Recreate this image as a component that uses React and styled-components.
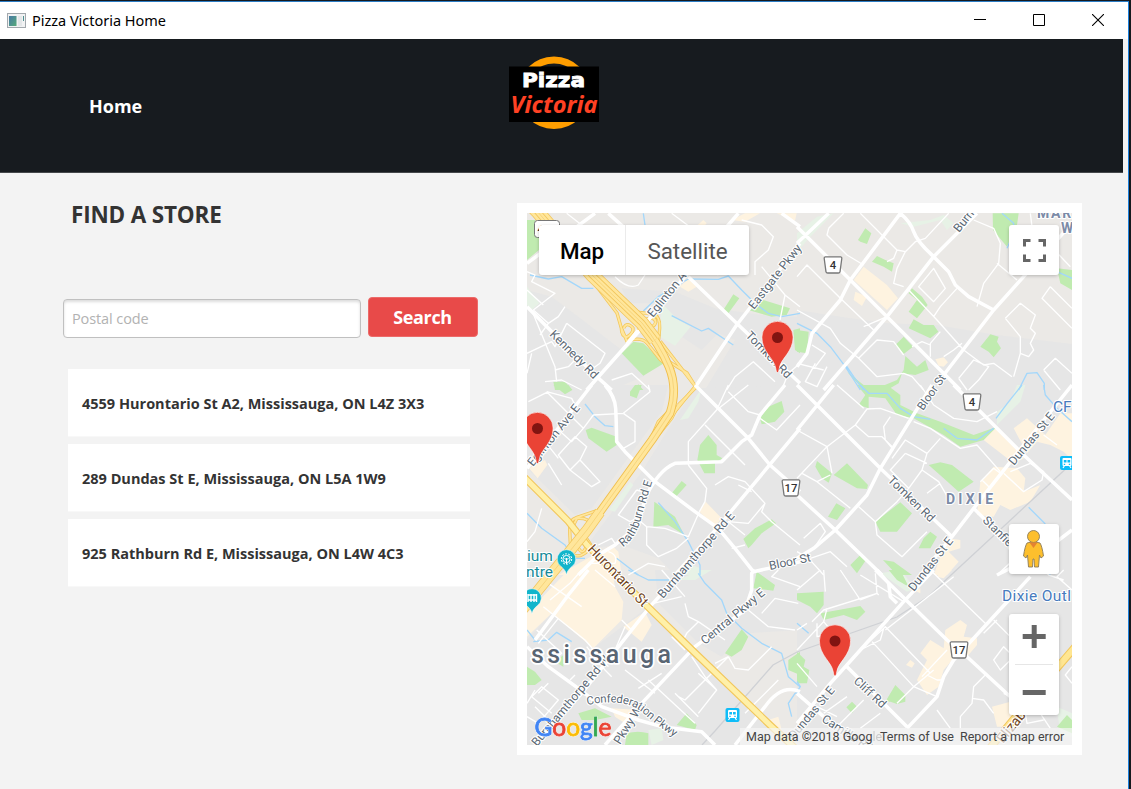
import React from 'react';
import styled, { createGlobalStyle } from 'styled-components';

const GlobalStyle = createGlobalStyle`
  * { box-sizing: border-box; }
  body { margin: 0; background: #14171b; overflow: hidden; }
  button, input { font-family: inherit; }
`;

const ui = `'Open Sans', 'Noto Sans', sans-serif`;

const Desktop = styled.div`
  width: 1131px;
  height: 789px;
  padding: 1px 2px 0 0;
  background: #15191e;
  font-family: ${ui};
`;

const AppWindow = styled.div`
  height: 788px;
  display: flex;
  flex-direction: column;
  background: #f3f3f3;
  border-top: 1px solid #2b7cc4;
  border-right: 1px solid #1c80dc;
`;

const TitleBar = styled.div`
  height: 37px;
  flex: none;
  display: flex;
  align-items: center;
  justify-content: space-between;
  padding-left: 7px;
  background: #fff;
`;

const TitleGroup = styled.div`
  display: flex;
  align-items: center;
  gap: 6px;
`;

const Title = styled.span`
  font-family: 'Noto Sans', sans-serif;
  font-size: 14.5px;
  letter-spacing: -0.02px;
  line-height: 18px;
  margin-top: -2px;
  color: #000;
  white-space: nowrap;
`;

const WindowControls = styled.div`
  display: flex;
  gap: 47px;
  padding: 0 24px 1px 0;
  svg { display: block; }
`;

const Header = styled.header`
  height: 134px;
  width: 1123px;
  flex: none;
  display: flex;
  background: #171b1f;
  border-bottom: 1px solid #45484b;
`;

const NavLink = styled.a`
  width: 420px;
  margin-left: 89px;
  padding-top: 55px;
  font-size: 18px;
  line-height: 24px;
  font-weight: 700;
  color: #fff;
`;

const LogoSlot = styled.div`
  padding-top: 16px;
  svg { display: block; }
`;

const Main = styled.main`
  flex: 1;
  display: flex;
  align-items: flex-start;
`;

const Finder = styled.section`
  width: 517px;
  padding: 28px 0 0 63px;
`;

const Heading = styled.h1`
  margin: 0 0 69px 8px;
  height: 27px;
  font-size: 22.5px;
  line-height: 27px;
  font-weight: 700;
  letter-spacing: -0.17px;
  color: #333;
`;

const SearchRow = styled.form`
  display: flex;
  gap: 6.5px;
  height: 40px;
`;

const PostalInput = styled.input`
  width: 298px;
  height: 39px;
  margin-top: 2px;
  padding: 0 8px 1px;
  border: 1px solid #c0c0c0;
  border-radius: 4px;
  background: #fff;
  box-shadow: inset 0 2px 3px #ddd;
  font-size: 14.5px;
  &::placeholder { color: #b2b2b2; opacity: 1; font-weight: 400; letter-spacing: -0.1px; }
`;

const SearchButton = styled.button`
  width: 110px;
  height: 40px;
  padding: 0 0 1px;
  border: 1px solid #ec6a69;
  border-radius: 4px;
  background: #e84a49;
  color: #fff;
  font-size: 18px;
  font-weight: 700;
  letter-spacing: -0.35px;
`;

const StoreList = styled.ul`
  list-style: none;
  margin: 32px 0 0 5px;
  padding: 0;
  width: 402px;
  display: flex;
  flex-direction: column;
  gap: 7px;
`;

const Store = styled.li`
  height: 68px;
  padding: 1px 14px 0;
  display: flex;
  align-items: center;
  background: #fff;
  border: 1px solid #f8f8f8;
  border-width: 0 0 1px;
  color: #333;
  font-size: 14.5px;
  font-weight: 700;
  white-space: nowrap;
`;

const MapPanel = styled.section`
  width: 565px;
  height: 552px;
  margin-top: 30px;
  padding: 10px;
  background: #fff;
`;

const MapView = styled.div`
  position: relative;
  width: 545px;
  height: 532px;
  overflow: hidden;
  font-family: Roboto, sans-serif;
  > svg { display: block; }
`;

const GoogleMark = styled.text`
  font-family: Lato, sans-serif;
  font-size: 25.5px;
  stroke-width: 0.9px;
  filter: drop-shadow(0 0 0.6px #fff) drop-shadow(0 0 0.6px #fff) drop-shadow(0 0 0.6px #fff);
`;

const GoogleLetter = styled.tspan`
  fill: ${(p) => p.$color};
  stroke: ${(p) => p.$color};
`;

const MapTypes = styled.div`
  position: absolute;
  left: 12px;
  top: 12px;
  width: 210px;
  height: 50px;
  display: flex;
  background: #fff;
  border-radius: 3px;
  box-shadow: 0 1px 4px -1px rgba(0, 0, 0, 0.35);
`;

const MapType = styled.button`
  width: ${(p) => p.$width}px;
  padding: 2px 0 0;
  border: 0;
  border-right: ${(p) => (p.$active ? '1px solid #ebebeb' : '0')};
  background: none;
  color: ${(p) => (p.$active ? '#000' : '#565656')};
  font-size: 22.4px;
  font-weight: ${(p) => (p.$active ? 500 : 400)};
`;

const MapControl = styled.div`
  position: absolute;
  right: 13px;
  top: ${(p) => p.$top}px;
  width: 50px;
  height: ${(p) => p.$height}px;
  background: #fff;
  border-radius: 3px;
  box-shadow: 0 1px 4px -1px rgba(0, 0, 0, 0.35);
  svg { display: block; }
`;

const Attribution = styled.div`
  position: absolute;
  right: 0;
  bottom: 0;
  height: 17px;
  display: flex;
  align-items: center;
  padding: 0 8px 0 6px;
  background: rgba(245, 245, 245, 0.7);
  color: #444;
  font-size: 12.5px;
  line-height: 17px;
  white-space: nowrap;
`;

const Credit = styled.span`
  width: ${(p) => p.$width}px;
  flex: none;
`;

const Faded = styled.span`
  opacity: 0.22;
`;

/* Map geometry, one entry per sheet; units are thirds of a pixel from the sheet's origin. */
const sheets = [
  {
    x: 515, y: 200,
    homes: 'M36 270 110 290 190 350 320 450 390 527 290 570H36ZM320 265 480 275 600 325 780 350 855 350V570H570L660 420 610 400 560 450 500 410 440 310 340 310Z',
    pale: 'M440 310 490 360 527 380 480 437 435 410ZM36 260 73 310 50 330 36 315Z',
    parks: 'M36 60 60 60 75 105 72 150 36 180ZM320 460 355 425 385 430 447 490 385 527ZM625 330 655 283 673 295 640 340ZM700 330 745 300 825 325 815 345 770 350ZM835 390 855 385V460L840 450ZM115 545 150 545 172 570H120ZM355 570 370 553 385 570Z',
    shops: 'M565 60 575 70 545 105 525 95ZM650 60 690 40H735L690 65ZM785 40H845L840 62ZM495 260 520 235 545 260 520 275Z',
    water: 'M45 225 100 237 140 230 200 265 235 265M385 333 430 290 520 237 610 238 640 228 680 270 720 310 760 340 800 350 855 340M470 347 560 393 580 385 655 435M385 40 390 75',
    minor: 'M36 215 60 225 50 245 120 280 55 330M85 315 36 270M55 330 100 370 130 350 150 320M100 370 75 405M155 370 270 460 255 490 220 515M155 370 120 440 110 425 36 460M50 330 120 500 125 545M50 460 36 520M90 545 140 540 200 570M120 510 160 500 180 480M300 230Q340 270 370 255L390 225M290 540 350 520 405 570M635 570 660 530 715 485 780 545M855 490 820 520 800 570M855 320 810 285 795 360M155 40 200 75M680 60 740 75 775 110 760 150 720 185V225M470 40 530 85M560 180 610 225M740 200 810 285',
    major: 'M215 570 375 390 640 75 670 40M520 230 665 370 855 550M545 555 665 375 855 130M36 320 245 530 290 570M36 190 240 40M800 40 855 80M280 40 330 85',
  },
  {
    x: 797, y: 200,
    homes: 'M0 330 130 350 270 370 420 375 600 405 825 432V570H0Z',
    pale: 'M0 100 60 50 110 40 40 110 10 145 0 140ZM310 70 400 60 440 45 470 70 450 90 430 60 350 80Z',
    parks: 'M183 120 205 85 223 100 210 132 190 125ZM225 185 240 168 265 180 290 190 285 215 260 200ZM345 265 375 290 392 315 360 355 335 335 360 300 335 280ZM350 358 380 375 410 375 424 395 400 415 335 385ZM295 435 320 410 348 440 320 462ZM325 468 360 500 385 480 395 510 355 525 315 520 305 550 270 570H200L150 515 200 555 240 565 300 540 320 510ZM550 440 580 403 605 410 600 425 612 445 590 472 575 455ZM587 40H665L660 75 630 140 588 90ZM780 205 825 210V270L790 250ZM0 390 35 395 30 460 0 455Z',
    shops: 'M200 200 270 255 303 295 270 330 170 240ZM175 275 210 290 195 318 170 300ZM415 478 440 472 453 487 440 500 425 497Z',
    water: 'M0 370 60 400 100 440 145 500 190 570M143 490 170 530 200 570M665 570 690 520 720 518 742 550V570M615 40 650 70V100L630 145M780 215 825 235',
    minor: 'M95 85 90 105 150 165 200 195M95 85 140 40M190 40 300 150 325 155 355 125 385 115 455 40M325 155 300 205 290 250 320 260M300 150 290 175 270 185M0 230 30 195 130 295 230 390M0 330 100 385 130 430 185 475 240 420 290 425 320 465M185 475 240 530 320 520 345 530 380 570M410 205 365 260 410 305 445 265ZM480 265 430 320 410 350M335 270 420 360 500 450M530 60 590 85 610 130 605 190 560 250 540 320M600 190 660 240M625 355 670 310 715 345 700 385 715 400 700 430 710 450 695 470 670 460M625 355 670 410V460L650 530M760 260 735 295 825 385M760 260 825 325M500 450 560 495 590 490 645 530M485 535 530 480 575 500 545 540 515 570M485 535 510 570M740 510 775 475 825 520M740 510 790 570M45 435 85 460 55 500 M0 490 80 510M90 500 60 560 25 545 55 490M400 470 400 430 430 395M345 440 375 425 400 435M440 470 470 450 495 430M200 380 270 350M700 40 705 80 820 200',
    major: 'M0 80 160 240 270 350 490 570M80 570 270 350 410 170 540 40M310 40Q340 65 350 95T410 170L455 215 475 255 515 290 590 330M440 525 590 330 680 230 825 70M310 40 160 240 130 300 45 400 30 460 0 500M0 130 95 40',
  },
  {
    x: 515, y: 385,
    homes: 'M36 0H460L440 80 360 190 230 370 180 390 36 250ZM480 100 540 10 855 0V570H480L430 520 320 480 210 490 380 260Z',
    pale: 'M345 290 355 300 300 380 282 375ZM495 105 560 10 550 50 520 100ZM510 530 555 550V570H500Z',
    parks: 'M115 0H160L172 15 150 28ZM345 20 360 0H380L365 40 345 32ZM212 135 230 128 305 155V180L275 200 220 160ZM735 100 760 65 800 48 808 80 780 110 740 118ZM555 180 580 150 605 180 605 210 622 220 600 235V265H568L547 225ZM470 325 500 288 515 300 480 338ZM418 350 480 395 508 450 460 420 415 425ZM685 462 720 430 770 403 783 415 740 445 710 480 700 490Z',
    shops: 'M42 250 90 225 97 240 68 280ZM553 380 572 350 620 400 600 425ZM130 570 200 530 290 480 310 500 320 570Z',
    water: 'M210 57 240 95 270 122 295 125M36 385 80 430 150 480 175 520 210 520M430 353 480 410 520 470 555 540V570M305 520 370 570',
    minor: 'M95 20 155 80 205 130 170 170 125 130M205 130 235 90 325 85M95 20 170 40 185 70M40 50 100 20M130 210 180 155 215 185 195 225 165 255ZM195 225 255 290 230 305 165 255M90 170 130 220M100 235 140 300M325 85 405 20 400 0M325 85 360 110V170L325 190M80 370 60 440 36 470M520 240 520 170 605 75 700 0M605 75 640 0M520 240 575 310 570 350 553 380M570 120 690 240M600 300 640 275 690 290 750 355 700 415 640 410 690 450M750 355 740 380 770 410 855 480M670 300 710 320M365 315 310 390 345 410 365 400M365 315 400 325M365 400 395 425 450 430 520 455 553 380M395 425V480L430 515 485 490 520 460M735 100 785 135 855 60M690 480 650 490M640 20 700 80 735 90M250 480 290 460 300 475M280 500Q310 510 300 535H220M340 570 400 535 450 545',
    major: 'M270 0Q300 35 302 70T305 170L330 200 420 290 540 380 610 430 660 490 715 560M540 0 700 160 765 240 855 320M855 130 610 425 480 570M810 0 735 90 710 150 680 170 620 230 480 235Q430 255 390 340L370 420 300 480 250 510 190 570M36 250 230 0M855 530 715 560',
  },
  {
    x: 797, y: 385,
    homes: 'M0 0H825V570H0Z',
    pale: 'M600 80 640 50 660 0H685L670 50 600 120Z',
    parks: 'M180 0H270L310 30 310 60 360 85 430 110 530 150 600 125 560 165 490 185 440 150 350 100 300 90 265 40 215 35 215 70 185 60 205 30ZM60 228 105 265 95 293 75 280 55 245ZM110 270 150 235 213 300 210 312 180 310ZM93 395 118 355 145 370 120 405ZM235 410 310 352 345 385 300 440 250 440ZM365 490 380 460 400 440 420 455 400 490ZM395 240 430 232 465 240 530 290 485 320 440 280ZM160 540 190 510 207 525 180 565ZM258 525 290 530 345 570H300Z',
    shops: 'M560 165 595 125 690 215 650 235ZM650 130 690 100 745 150 790 85H825V225L800 200 760 180 720 170 690 205ZM550 290 590 245 660 250 685 280 680 320 730 300 700 350 640 375 610 360 590 395 540 390ZM450 460 490 465V490L455 500 485 530 450 570H410Z',
    water: 'M190 0 215 25 270 25 310 70 350 95 400 103 M440 130 480 160 540 165 590 130 M597 100 635 50 675 0M740 0 745 30 780 70 825 110M695 367 745 417',
    minor: 'M0 135 90 185 105 265M90 185 175 120 210 72 250 70 335 100M175 120 215 155 255 155 290 190M280 95 260 125 265 165 290 195M15 265 60 290 160 370M0 280 90 185M60 290 100 270M350 110 400 130 490 190 540 180 610 260M430 160 390 205 375 255 335 310M390 205 325 165 285 220M325 205 390 235M325 205 280 255 335 310M375 255 425 290 460 350M335 310 300 350 235 410 240 450 315 515 350 480 390 440M430 295 390 325M185 365 235 410M20 460 70 415 85 440 50 490M0 500 35 520 80 570M40 520 100 500 150 545M550 290 590 250 610 265M620 265 680 320 735 285 740 260 700 235 640 260M555 285 580 310M370 0 410 60 470 100 540 110 600 80M740 150 780 180M120 0 200 70M600 570 720 460',
    major: 'M0 0 60 60 250 250 465 455M470 0 540 70 680 210 825 345M405 0 250 250 210 330 115 435 50 490 0 520M825 0 680 180 530 370 465 455 370 570M0 135 110 0M0 330 115 435 255 570M825 435 740 500 600 570M530 370 650 490',
  },
  {
    x: 515, y: 570,
    homes: 'M36 210 110 130 235 235 400 110 530 240 650 370 790 500V525H36ZM420 0H855V180L690 190 620 260 550 220 430 100Z',
    pale: 'M400 480 440 475 445 510 410 525ZM490 30 555 0H590L540 30Z',
    parks: 'M36 290 60 305 80 330 60 345H36ZM190 430 240 415 290 440 240 450 200 450ZM485 465 515 430 545 465 540 480ZM335 490Q370 480 400 490V525H330ZM630 250 680 178 700 200 680 240 650 260ZM715 55 725 5 780 45 775 62ZM820 270 855 245V315L820 300ZM120 275 145 255V290Z',
    shops: 'M36 130 160 0H290L300 50 325 95 320 150 235 235 110 130 36 200ZM325 170 390 125 410 165 380 215ZM290 415 370 420 330 460 300 440ZM760 450 790 440 800 480 780 500Z',
    water: 'M55 215 100 210 125 187 170 215M340 0 400 30 470 30 510 15 M550 10 570 40 620 90 635 130 680 175 740 220 800 250 820 320 855 350M830 440 820 400 840 370 855 365M36 20 100 0M36 180 60 210',
    minor: 'M85 110 210 210 280 290M65 180 140 250 110 280M130 145 70 220M105 90 165 40 200 0M100 40 200 110M240 0 300 50M165 330 180 315M320 150 350 180M215 230 270 300 290 320M330 300 420 370M370 355 440 310M400 330 540 460M480 370 550 440M550 310 605 360 550 430M530 260 570 320 605 360M490 380 510 390 570 330 640 260M510 100 520 140 550 155 515 190 500 220M550 155 630 210M415 100 500 80M470 200 510 240M640 260 600 280M640 260 660 295 700 300 740 260 770 230M700 120 760 170 840 180M740 130 780 85 850 100M790 0 770 20 855 50M36 440 70 460 130 390 80 350 50 380 110 430M100 340 70 370M60 410 110 460M36 400 60 360M440 0 510 80M690 430 790 330M330 170 300 240',
    major: 'M36 230 100 290 190 355 260 410 370 450 440 470 560 485 600 525M60 210 160 75 220 0M505 0 405 110 200 370 60 525M720 0 710 10V60L690 120 540 230 380 400 270 525M660 525 750 410Q800 340 855 365',
  },
  {
    x: 797, y: 570,
    homes: 'M0 0H825V525H0Z',
    pale: 'M250 10 310 0 355 55 330 65ZM780 410 825 430V500H790Z',
    parks: 'M0 70 80 65V105L60 130 40 110 0 90ZM70 130 190 108 205 125 180 150 140 135 80 150ZM265 395 295 345 325 375V395L300 402 280 395ZM148 412 165 395 180 410 165 430ZM0 245 25 270 20 290 37 300 30 340H0ZM780 470 810 435 825 450V490ZM275 0H310L335 50 300 30Z',
    shops: 'M445 180 490 150 510 165 500 200 540 205V225L510 260 470 265 440 300 425 350 390 375 360 330 390 270 370 250 400 210 440 235ZM327 285 340 270 353 280 345 293ZM420 20 430 0H465L440 25ZM585 410 640 395 680 420 660 470H600ZM350 60 370 55V70Z',
    water: 'M0 335 10 350 0 365M0 160 35 190M740 0 760 15',
    minor: 'M0 60 70 0M80 0 85 65M90 115 80 155 110 190 60 200 60 160M45 155 80 120 240 70 245 75M190 90 240 70 235 10M80 155 0 240M190 15 320 95M0 180 30 160M190 240 265 170 400 310M260 175 250 210 190 240M225 215 350 350 420 380M265 180 470 20M130 0 190 90M375 320 450 240M390 315 420 330 440 330M350 350 410 300M300 400 350 350M60 410 120 440M80 430 150 380M120 470 200 390M0 280 60 350M400 0 570 165M590 270 620 230 650 260 610 300ZM590 150 680 240M600 150 560 190M570 310 530 350 525 400 490 440 490 475M525 385 560 390 590 430M620 370 660 390M420 420 460 475M740 0 755 15 800 30M800 0 780 20 825 60M710 400 760 475M700 420 640 475M825 290 805 315 825 340M680 400 690 460 740 450M190 475 250 430',
    major: 'M410 0 320 95 190 240 100 340 0 460M235 0 450 210 510 260 640 380M330 475 420 380 440 320 470 270 700 20M150 290 330 470M0 370 80 440M240 0 275 40 280 80 300 100',
  },
];

const highway = 'M526 200 537 211 592 275 642 323Q660 345 669 367T670 413L652 440 587 530 544 583 518 615';
const expressLanes = 'M526 200 537 211 592 275 642 323 655 340';
const lowerLanes = 'M600 512 587 530 544 583 518 615';
const hurontario = 'M524 477 568 521 587 545 648 607 692 650 770 725 796 749';
const elizabeth = 'M1075 647 1027 703 990 748';
const interchanges = [
  [527, 213, 'M205 215 270 300 283 345 300 385 335 350M283 345Q283 370 300 372 320 360 318 345 300 325 290 345M300 385Q340 370 360 390L400 440 440 470M305 292Q340 300 378 303 400 310 398 345L395 380M345 325Q385 305 386 328 380 350 355 332M400 385 505 520 432 610M425 445 480 480 505 520M435 480 445 570'],
  [527, 440, 'M215 210 150 232Q125 240 128 270L130 310M150 235Q190 232 187 258L175 280M150 235 132 270M205 225 175 285 187 328Q160 355 140 345M148 310Q165 355 178 318M175 290 195 320'],
  [515, 385, 'M465 75 430 110 400 180M490 60 470 100 430 150M545 5 490 60'],
];
const rail = 'M1072 463 950 576 929 596 897 617 797 652 773 665 715 731 702 745';

function Sheets({ layer, ...rest }) {
  return (
    <g {...rest}>
      {sheets.map((s) => (
        <path key={`${s.x}-${s.y}`} transform={`translate(${s.x} ${s.y}) scale(.33333)`} d={s[layer]} />
      ))}
    </g>
  );
}

function Ramps(props) {
  return (
    <g {...props}>
      {interchanges.map(([x, y, d]) => (
        <path key={`${x}-${y}`} transform={`translate(${x} ${y}) scale(.33333)`} d={d} />
      ))}
    </g>
  );
}

const labels = [
  ['Eglinton Ave E', 653, 318, -51, 12],
  ['Eastgate Pkwy', 754, 310, -52, 12],
  ['Kennedy Rd', 549, 335, 45, 12],
  ['Tomken Rd', 745, 336, 46, 12],
  ['Burnhamthorpe Rd E', 663, 599, -49, 12],
  ['Burnhamthorpe Rd W', 537, 747, -50, 12],
  ['Bloor St', 923, 411, -55, 11.5],
  ['Bloor St', 770, 570, -12, 12],
  ['Tomken Rd', 887, 481, 44, 12],
  ['Dundas St E', 1014, 466, -50, 12],
  ['Dundas St E', 914, 592, -52, 12],
  ['Dundas St E', 794, 740, -50, 12],
  ['Stanfield Rd', 982, 521, 45, 12],
  ['Central Pkwy E', 705, 645, -40, 12],
  ['Cliff Rd', 853, 682, 43, 12],
  ['Camilla Rd', 821, 721, 33, 12],
  ['Pkwy W', 620, 745, -58, 12],
  ['Burnhamthorpe', 959, 233, -51, 12],
];

const googleLetters = [
  ['G', '#4285f4'],
  ['o', '#ea4335'],
  ['o', '#fbbc05'],
  ['g', '#4285f4'],
  ['l', '#34a853'],
  ['e', '#ea4335'],
];

function Shield({ x, y, n }) {
  return (
    <g transform={`translate(${x} ${y})`}>
      <path d="M-7.7-8.2H7.7Q9-8 8.8-6.5L7 6.8Q6.7 8 5.3 8H-5.3Q-6.7 8-7 6.8L-8.8-6.5Q-9-8-7.7-8.2Z" fill="#fff" stroke="#777" strokeWidth="1.3" />
      <text y="4.3" textAnchor="middle" fontSize="11.3" fontWeight="500" fill="#333">{n}</text>
    </g>
  );
}

function Pin({ x, y }) {
  return (
    <g transform={`translate(${x} ${y})`}>
      <path d="M0 0C-1.2 0-1.3-1.7-1.8-4.4-3.4-14.2-15.6-20.5-15.6-35.4A15.6 15.8 0 0 1 15.6-35.4C15.6-20.5 3.4-14.2 1.8-4.4 1.3-1.7 1.2 0 0 0Z" fill="#ea4335" stroke="#fff" strokeWidth=".6" />
      <circle cy="-35" r="5.5" fill="#811411" />
    </g>
  );
}

function Transit({ x, y }) {
  return (
    <g transform={`translate(${x} ${y})`}>
      <rect x="-7" y="-7" width="14" height="14" rx="2" fill="#0fbdf8" />
      <path d="M-3.5-5H3.5Q4.5-5 4.5-4V2Q4.5 3 3.5 3H-3.5Q-4.5 3-4.5 2V-4Q-4.5-5-3.5-5Z" fill="#fff" />
      <path d="M-2.7 3-4 5M2.7 3 4 5" stroke="#fff" strokeWidth="1.2" />
      <path d="M-3.2-3H-.5V-.4H-3.2ZM.5-3H3.2V-.4H.5ZM-3.2.8H-1.8V2H-3.2ZM1.8.8H3.2V2H1.8Z" fill="#0fbdf8" />
    </g>
  );
}

function PlacePin({ x, y, children }) {
  return (
    <g transform={`translate(${x} ${y})`}>
      <path d="M0 16C-.8 12-2 10.5-5.5 7.5A9.3 9.3 0 1 1 5.5 7.5C2 10.5.8 12 0 16Z" fill="#12b5cb" stroke="#fff" strokeWidth=".5" />
      {children}
    </g>
  );
}

function CityMap() {
  return (
    <svg width="545" height="532" viewBox="527 213 545 532" fontFamily="Roboto, sans-serif">
      <rect x="527" y="213" width="545" height="532" fill="#ebe9e6" />
      <Sheets layer="homes" fill="#e6e6e6" />
      <Sheets layer="pale" fill="#e7f2e6" />
      <Sheets layer="shops" fill="#fef3e0" />
      <Sheets layer="parks" fill="#c0ebb0" />
      <Sheets layer="water" fill="none" stroke="#a3d7fb" strokeWidth="4" strokeLinejoin="round" />
      <path d={rail} fill="none" stroke="#cfd1d5" strokeWidth="1.3" />
      <Sheets layer="minor" fill="none" stroke="#fff" strokeWidth="4" strokeLinejoin="round" />
      <g fill="none" strokeLinejoin="round">
        <Ramps stroke="#f3c75b" strokeWidth="10" />
        <Ramps stroke="#ffe69b" strokeWidth="5.5" />
      </g>
      <Sheets layer="major" fill="none" stroke="#fff" strokeWidth="10.5" strokeLinejoin="round" />
      <g fill="none" strokeLinejoin="round">
        <path d={hurontario} stroke="#f2c75c" strokeWidth="7.4" />
        <path d={hurontario} stroke="#fff0a8" strokeWidth="5.2" />
        <path d={elizabeth} stroke="#f2c75c" strokeWidth="8" />
        <path d={elizabeth} stroke="#ffe692" strokeWidth="6" />
        <path d={expressLanes} stroke="#f2c65e" strokeWidth="14" />
        <path d={lowerLanes} stroke="#f2c65e" strokeWidth="11" />
        <path d={highway} stroke="#f0bf4d" strokeWidth="8.6" />
        <path d={expressLanes} stroke="#ffe69b" strokeWidth="12.4" />
        <path d={lowerLanes} stroke="#ffe69b" strokeWidth="9.5" />
        <path d={highway} stroke="#ffe69b" strokeWidth="6.8" />
        <path d={expressLanes} stroke="#f2c65e" strokeWidth="6.6" />
        <path d={expressLanes} stroke="#ffe69b" strokeWidth="5" />
        <path d={highway} stroke="#f7d57c" strokeWidth="1" />
        <path d="M627 344 638 330" stroke="#fff" strokeWidth="3.5" />
      </g>
      <rect x="534.5" y="220.5" width="25" height="17" rx="3" fill="#fff" stroke="#777" />
      <text x="537.5" y="233" fontSize="11.3" fontWeight="500" fill="#333">403</text>
      <g fill="#5b6874" stroke="#fff" strokeWidth="2.2" strokeLinejoin="round" paintOrder="stroke">
        {labels.map(([text, x, y, angle, size]) => (
          <text key={`${text}${x}`} transform={`translate(${x} ${y}) rotate(${angle})`} fontSize={size}>{text}</text>
        ))}
        <text transform="translate(533 467) rotate(-51)" fontSize="12">Eglinton Ave E</text>
        <path id="rathburn" d="M623 547Q636 538 641 519T656 470" fill="none" stroke="none" />
        <text fontSize="11.6"><textPath href="#rathburn">Rathburn Rd E</textPath></text>
        <path id="confederation" d="M587 705Q625 697 643 713T682 742" fill="none" stroke="none" />
        <text fontSize="11.4" letterSpacing="-.2"><textPath href="#confederation">Confederation Pkwy</textPath></text>
        <text transform="translate(587 550) rotate(46)" fontSize="14" fill="#70451d" textLength="80">Hurontario St</text>
        <text transform="translate(1003 744) rotate(-51)" fontSize="14" fill="#70451d">Elizabeth</text>
        <text x="531" y="662.5" fontSize="25" fontWeight="500" fill="#596573" strokeWidth="3.5" textLength="140">ssissauga</text>
        <text x="946" y="504" fontSize="14" fontWeight="700" fill="#7c8ba7" textLength="47">DIXIE</text>
        <text x="1037" y="218" fontSize="14" fontWeight="700" fill="#7c8ba7" letterSpacing="1.7">MARK</text>
        <text x="1061" y="233" fontSize="14" fontWeight="700" fill="#7c8ba7">W</text>
        <text x="1053" y="412" fontSize="15.5" fill="#477bbd">CF</text>
        <text x="1002" y="601" fontSize="15.5" fill="#477bbd" textLength="69">Dixie Outl</text>
        <text x="527" y="561" fontSize="15.5" fill="#168b98">ium</text>
        <text x="526" y="577" fontSize="15.5" fill="#168b98">ntre</text>
      </g>
      <Shield x={833} y={265} n="4" />
      <Shield x={972} y={402} n="4" />
      <Shield x={791} y={488} n="17" />
      <Shield x={959} y={650} n="17" />
      <Transit x={732.5} y={715} />
      <Transit x={1067} y={463} />
      <PlacePin x={566.5} y={559}>
        <g fill="none" stroke="#fff" strokeWidth="1">
          <circle r="5.2" strokeDasharray="2 1.2" />
          <circle r="3.6" />
          <path d="M0 5V-1M-2-1 0 1 2-1" />
        </g>
      </PlacePin>
      <PlacePin x={532} y={598}>
        <path d="M-4-4V4M-1-4V4M2-4V4M4.5-4V4M-4-3H4.5M-4 2H4.5" fill="none" stroke="#fff" strokeWidth="1.4" />
      </PlacePin>
      <Pin x={777.5} y={372.5} />
      <Pin x={537.5} y={463.5} />
      <Pin x={835} y={676} />
      <GoogleMark x="534.5" y="736" textLength="77" lengthAdjust="spacingAndGlyphs">
        {googleLetters.map(([letter, color], i) => (
          <GoogleLetter key={i} $color={color}>{letter}</GoogleLetter>
        ))}
      </GoogleMark>
    </svg>
  );
}

function Logo() {
  return (
    <svg width="90" height="76" viewBox="0 0 90 76">
      <circle cx="45" cy="37.7" r="32.8" fill="none" stroke="#ff9e00" strokeWidth="7" />
      <rect y="11.5" width="90" height="55.5" fill="#000" />
      <text x="13" y="31.5" fontFamily="DejaVu Sans, sans-serif" fontWeight="700" fontSize="19.5" fill="#fff" stroke="#fff" strokeWidth=".9" textLength="63" lengthAdjust="spacingAndGlyphs">Pizza</text>
      <text x="1.5" y="58" fontFamily="Noto Sans, sans-serif" fontStyle="italic" fontWeight="700" fontSize="23" fill="#ff4123" textLength="87" lengthAdjust="spacingAndGlyphs">Victoria</text>
    </svg>
  );
}

export default function App() {
  return (
    <Desktop>
      <GlobalStyle />
      <AppWindow>
        <TitleBar>
          <TitleGroup>
            <svg width="19" height="16" viewBox="0 0 19 16">
              <defs>
                <linearGradient id="pane" x1="0" y1="0" x2="1" y2="1">
                  <stop offset="0" stopColor="#4779a5" />
                  <stop offset="1" stopColor="#56aa79" />
                </linearGradient>
              </defs>
              <rect x=".5" y=".5" width="18" height="14" fill="#f1f2f3" stroke="#a2a8ad" />
              <rect x="2" y="3" width="7.5" height="10" fill="url(#pane)" />
              <path d="M11 3H15V13H11Z" fill="#e3e6e8" />
              <path d="M16.5 3V8" stroke="#4d8f8f" />
            </svg>
            <Title>Pizza Victoria Home</Title>
          </TitleGroup>
          <WindowControls>
            <svg width="12" height="12"><path d="M0 5.5H12" stroke="#000" /></svg>
            <svg width="12" height="12"><path d="M.5.5H11.5V11.5H.5Z" fill="none" stroke="#000" /></svg>
            <svg width="12" height="12"><path d="M0 0 12 12M12 0 0 12" stroke="#000" strokeWidth="1.1" /></svg>
          </WindowControls>
        </TitleBar>
        <Header>
          <NavLink>Home</NavLink>
          <LogoSlot><Logo /></LogoSlot>
        </Header>
        <Main>
          <Finder>
            <Heading>FIND A STORE</Heading>
            <SearchRow>
              <PostalInput placeholder="Postal code" />
              <SearchButton type="button">Search</SearchButton>
            </SearchRow>
            <StoreList>
              <Store>4559 Hurontario St A2, Mississauga, ON L4Z 3X3</Store>
              <Store>289 Dundas St E, Mississauga, ON L5A 1W9</Store>
              <Store>925 Rathburn Rd E, Mississauga, ON L4W 4C3</Store>
            </StoreList>
          </Finder>
          <MapPanel>
            <MapView>
              <CityMap />
              <MapTypes>
                <MapType $active $width={87}>Map</MapType>
                <MapType $width={123}>Satellite</MapType>
              </MapTypes>
              <MapControl $top={12} $height={50}>
                <svg width="50" height="50"><path d="M15.5 21.5V15.5H21.5M29.5 15.5H35.5V21.5M35.5 29.5V35.5H29.5M21.5 35.5H15.5V29.5" fill="none" stroke="#666" strokeWidth="3" /></svg>
              </MapControl>
              <MapControl $top={311} $height={50}>
                <svg width="50" height="50">
                  <g fill="#fdbf2d" stroke="#8b7b58" strokeWidth=".9">
                    <path d="M18 19Q25 16 31 19 33 22 34.5 32L32 34 30.5 31 29.5 43H25.5L25 35 24 35 23.5 43H19.5L18.5 31 17 34 14.5 32Q16 22 18 19Z" />
                    <circle cx="24.5" cy="12.5" r="6" />
                  </g>
                  <path d="M20.5 18.5H28.5L24.5 24Z" fill="#e48331" />
                </svg>
              </MapControl>
              <MapControl $top={401} $height={101}>
                <svg width="50" height="101">
                  <path d="M13.7 22.5H36.7M25.2 11V34M13.7 78.5H36.7" fill="none" stroke="#666" strokeWidth="5" />
                  <path d="M6 50.5H44" stroke="#e6e6e6" />
                </svg>
              </MapControl>
              <Attribution>
                <Credit $width={134}>Map data ©2018 Goog<Faded>le</Faded></Credit>
                <Credit $width={80}>Terms of Use</Credit>
                <Credit $width={104}>Report a map error</Credit>
              </Attribution>
            </MapView>
          </MapPanel>
        </Main>
      </AppWindow>
    </Desktop>
  );
}
